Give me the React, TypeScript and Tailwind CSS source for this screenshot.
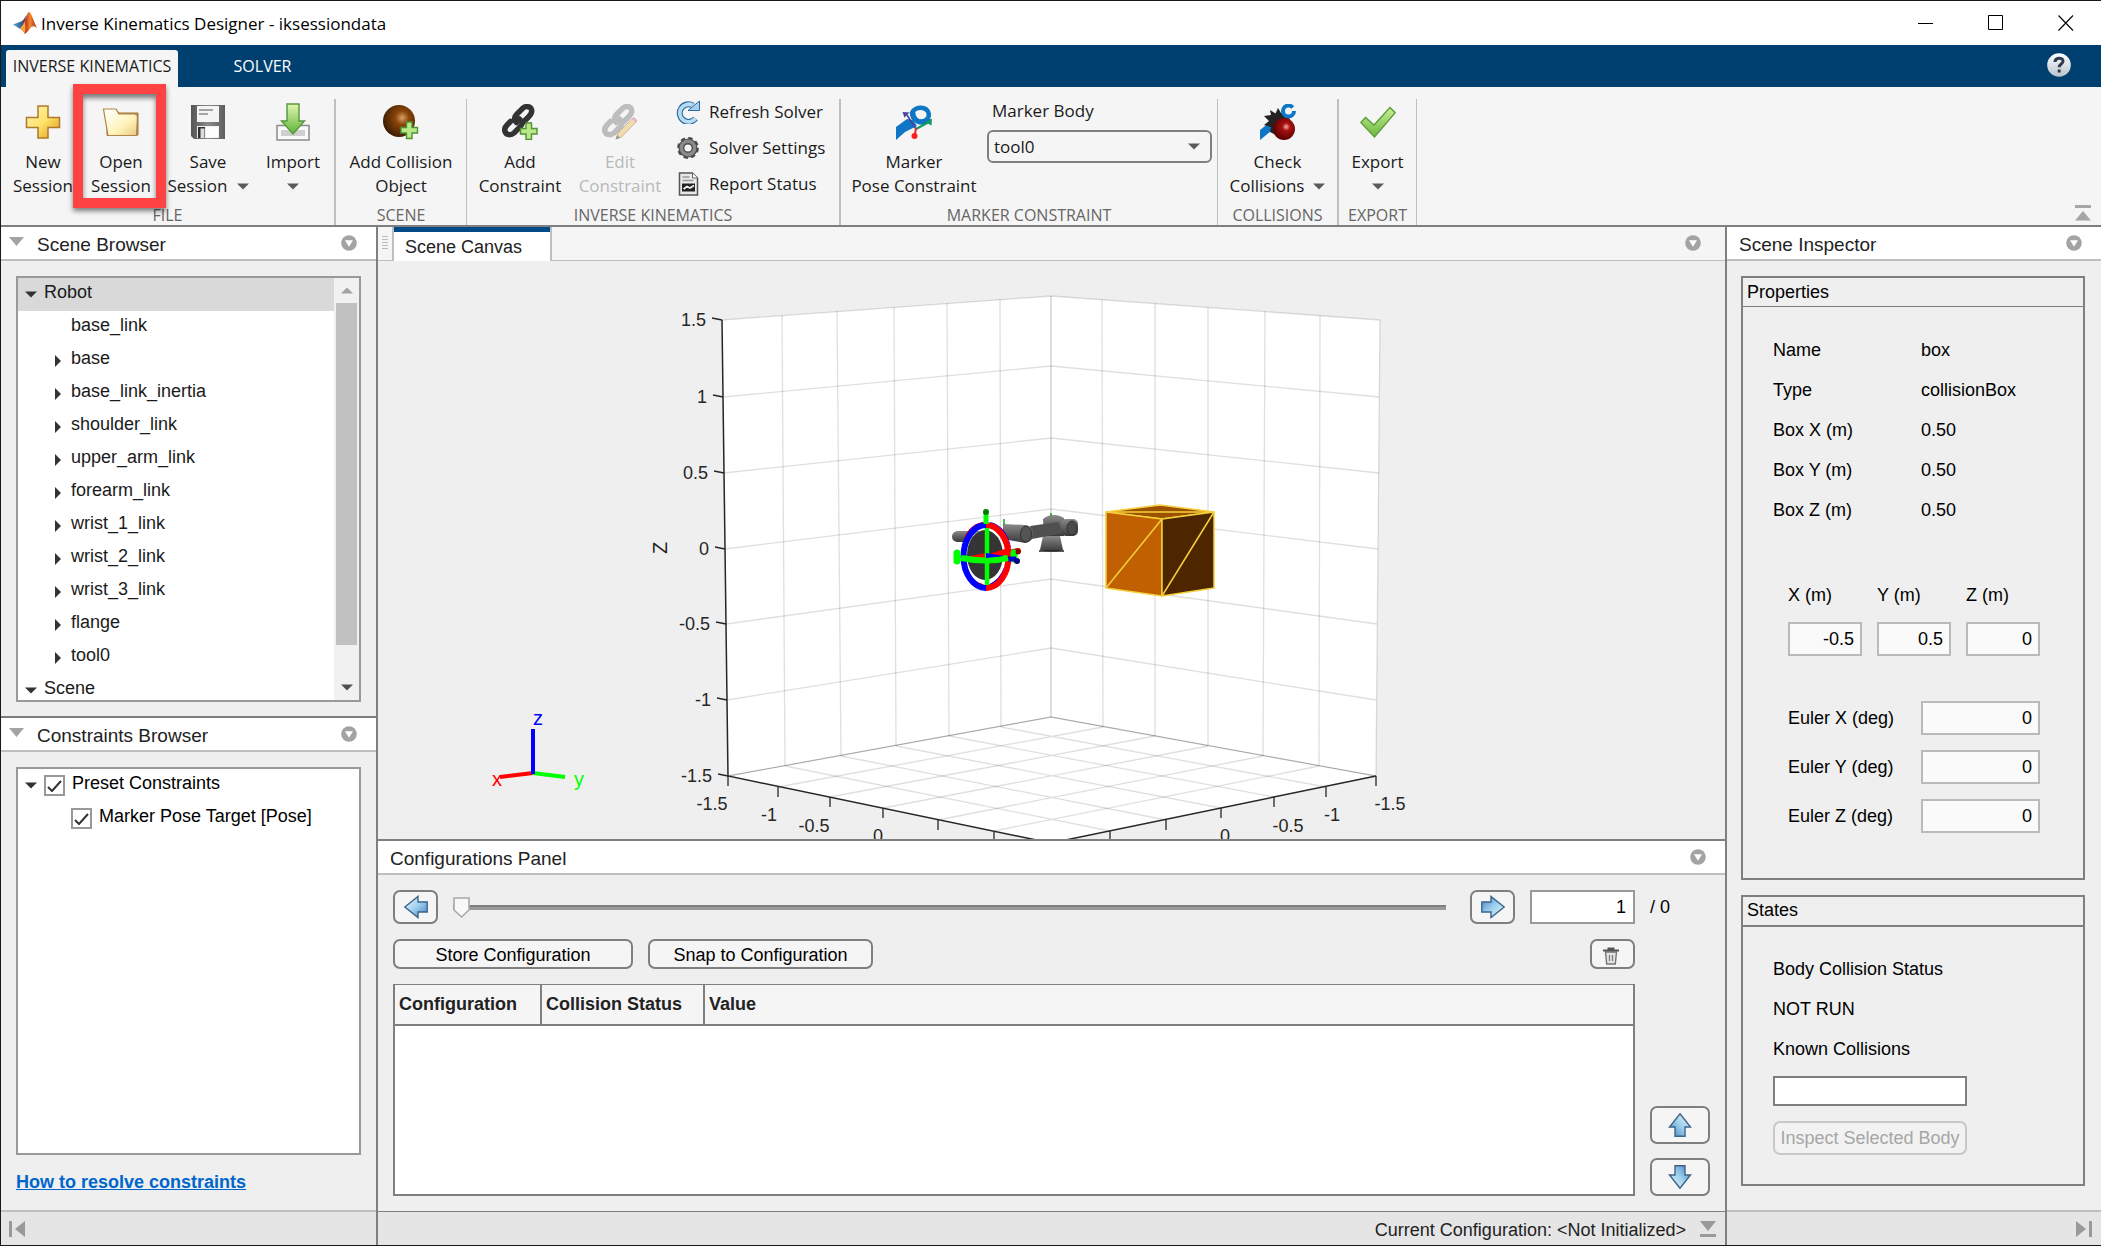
import React, { useState } from "react";

const sans = "font-['Liberation_Sans',Arial,sans-serif]";

/* ---------- small glyphs ---------- */

function Caret({ className = "text-[#5a5a5a]" }: { className?: string }) {
  return (
    <svg width="12" height="7" viewBox="0 0 12 7" className={className} aria-hidden="true">
      <path d="M0 0.5h12L6 6.5z" fill="currentColor" />
    </svg>
  );
}

function CaretRight() {
  return (
    <svg width="6" height="12" viewBox="0 0 6 12" aria-hidden="true">
      <path d="M0 0v12L6 6z" fill="#333" />
    </svg>
  );
}

function PanelMenu() {
  return (
    <button aria-label="Panel menu" className="block">
      <svg width="16" height="16" viewBox="0 0 16 16">
        <circle cx="8" cy="8" r="7.8" fill="#a3a3a3" />
        <path d="M4 5.2h8L8 11.8z" fill="#fff" />
      </svg>
    </button>
  );
}

function MatlabLogo() {
  return (
    <svg width="24" height="22" viewBox="0 0 24 22" aria-hidden="true">
      <defs>
        <linearGradient id="ml1" x1="0" x2="1">
          <stop offset="0" stopColor="#5fa8dc" />
          <stop offset="1" stopColor="#1f4e79" />
        </linearGradient>
        <linearGradient id="ml2" x1="0" x2="1">
          <stop offset="0" stopColor="#7a1c12" />
          <stop offset="0.35" stopColor="#c8371c" />
          <stop offset="0.6" stopColor="#f08a2c" />
          <stop offset="1" stopColor="#a02314" />
        </linearGradient>
      </defs>
      <path d="M0 12.5L8 9.4l3 2.4-4.2 5z" fill="url(#ml1)" />
      <path d="M8 9.4c2.200-.4 4-4.200 5.500-6.700L11 12.300z" fill="#3b4a72" />
      <path d="M16.200 0c1.800 0 4.500 9.500 7.800 16-2.600-2.200-4.500-2.600-7 .5-1.700 2.200-3.200 4.500-5.400 5.500-.8-2.300-2.200-4.600-4.800-5.200 5-3.800 6.700-16.800 9.400-16.800z" fill="url(#ml2)" />
      <path d="M11.600 22c-.8-2.300-2.200-4.600-4.800-5.200 2-1.600 3.500-4.600 4.700-7.500 1 4 1.500 8 .1 12.700z" fill="#f2a93b" />
    </svg>
  );
}

/* ---------- ribbon icons ---------- */

function PlusIcon() {
  return (
    <svg width="36" height="36" viewBox="0 0 36 36" aria-hidden="true">
      <defs>
        <linearGradient id="pl" x1="0" y1="0" x2="1" y2="1">
          <stop offset="0" stopColor="#fff6c0" />
          <stop offset="0.5" stopColor="#ffe36a" />
          <stop offset="1" stopColor="#d99a1c" />
        </linearGradient>
      </defs>
      <path d="M13 2h10v11.500h11.500v10H23V34H13V23.500H1.500v-10H13z" fill="url(#pl)" stroke="#b0782a" strokeWidth="1.500" />
    </svg>
  );
}

function FolderIcon() {
  return (
    <svg width="36" height="36" viewBox="0 0 36 36" aria-hidden="true">
      <defs>
        <linearGradient id="fo" x1="0" y1="0" x2="1" y2="1">
          <stop offset="0" stopColor="#ffffff" />
          <stop offset="0.6" stopColor="#fff4bd" />
          <stop offset="1" stopColor="#e8c77c" />
        </linearGradient>
      </defs>
      <path d="M4 31.500V5.500h9l3 3.500h19v22z" fill="#c79a5b" stroke="#9c7236" />
      <path d="M.5 5h12.500l2.800 5h16.500l2.200 2-1 19.500H5z" fill="url(#fo)" stroke="#b08548" strokeWidth="1.200" />
    </svg>
  );
}

function SaveIcon() {
  return (
    <svg width="36" height="36" viewBox="0 0 36 36" aria-hidden="true">
      <defs>
        <linearGradient id="sv" x1="0" x2="1">
          <stop offset="0" stopColor="#555" />
          <stop offset="0.5" stopColor="#8a8a8a" />
          <stop offset="1" stopColor="#5d5d5d" />
        </linearGradient>
      </defs>
      <path d="M1 1h34v34H4l-3-3z" fill="url(#sv)" />
      <path d="M7 2h22v16H7z" fill="#f4f4f4" />
      <path d="M9 6h14M9 10h9" stroke="#888" strokeWidth="1.500" />
      <path d="M7 22h22v12H7z" fill="#eee" />
      <path d="M8 23h7v11H8z" fill="#333" />
      <path d="M10.500 24.500h4V34h-4z" fill="#ddd" />
      <path d="M16 23h12v10.500H16z" fill="#fdfdfd" />
    </svg>
  );
}

function ImportIcon() {
  return (
    <svg width="36" height="38" viewBox="0 0 36 38" aria-hidden="true">
      <defs>
        <linearGradient id="im" x1="0" y1="0" x2="0" y2="1">
          <stop offset="0" stopColor="#e0f7b0" />
          <stop offset="1" stopColor="#5fb336" />
        </linearGradient>
      </defs>
      <path d="M2 22.500h32V37H2z" fill="#fafafa" stroke="#8b8b8b" strokeWidth="1.500" />
      <path d="M6 27h24v6H6z" fill="#cfcfcf" />
      <path d="M12 1h12v17h5.500L18 31 6.500 18H12z" fill="url(#im)" stroke="#55963c" strokeWidth="1.400" />
    </svg>
  );
}

function GreenPlus({ x, y }: { x: number; y: number }) {
  return (
    <path
      transform={`translate(${x} ${y})`}
      d="M6.500 1h5.500v5.500h5.500V12H12v5.500H6.500V12H1V6.500h5.500z"
      fill="#b9e986"
      stroke="#4f9135"
      strokeWidth="1.400"
    />
  );
}

function SphereAddIcon() {
  return (
    <svg width="36" height="36" viewBox="0 0 36 36" aria-hidden="true">
      <defs>
        <radialGradient id="sp" cx="0.6" cy="0.4" r="0.6">
          <stop offset="0" stopColor="#d9a06a" />
          <stop offset="0.35" stopColor="#8c4508" />
          <stop offset="1" stopColor="#3f1e03" />
        </radialGradient>
      </defs>
      <circle cx="16" cy="17" r="16" fill="url(#sp)" />
      <GreenPlus x={17} y={17} />
    </svg>
  );
}

function ChainLinks({ color }: { color: string }) {
  return (
    <g fill="none" stroke={color} strokeWidth="5.500" strokeLinecap="round">
      <path d="M14.500 18.500C11.500 15.500 12.500 12.500 15 10l6-6c3-2.500 7.500-1.500 8.500 1.500s-.5 5-3.500 8l-4 4" />
      <path d="M17.500 15c3 2.500 3.500 5 .5 8l-6 6c-3 2.500-7 2-8.500-.5s-.5-5.500 2-8l3-3" />
    </g>
  );
}

function ChainAddIcon() {
  return (
    <svg width="36" height="36" viewBox="0 0 36 36" aria-hidden="true">
      <ChainLinks color="#333" />
      <GreenPlus x={17.5} y={18} />
    </svg>
  );
}

function ChainEditIcon() {
  return (
    <svg width="36" height="36" viewBox="0 0 36 36" aria-hidden="true">
      <ChainLinks color="#bdbdbd" />
      <path d="M14 35l2-6L31 14l3.500 3.500L19.500 33z" fill="#f0dcae" stroke="#c9b891" strokeWidth="1" />
      <path d="M30 15l2-2 3.500 3.500-2 2z" fill="#eab0c0" />
      <path d="M13.500 35.500l1.800-4.500 2.700 2.700z" fill="#999" />
    </svg>
  );
}

function RefreshIcon() {
  return (
    <svg width="24" height="24" viewBox="0 0 24 24" aria-hidden="true">
      <path d="M19.500 18.500A8.800 8.800 0 1 1 17 5.500" fill="none" stroke="#2e6a9c" strokeWidth="6" />
      <path d="M19.500 18.500A8.800 8.800 0 1 1 17 5.500" fill="none" stroke="#b5dcf2" strokeWidth="3.800" />
      <path d="M12 10.500h11.500V1z" fill="#a4d2ee" stroke="#2e6a9c" strokeWidth="1" />
    </svg>
  );
}

function GearIcon() {
  return (
    <svg width="24" height="24" viewBox="0 0 24 24" aria-hidden="true">
      <circle cx="12" cy="12" r="9.300" fill="none" stroke="#4a4a4a" strokeWidth="3.200" strokeDasharray="4.200 3.100" />
      <circle cx="12" cy="12" r="6.800" fill="none" stroke="#8a8a8a" strokeWidth="4.600" />
      <circle cx="12" cy="12" r="9" fill="none" stroke="#4a4a4a" strokeWidth="1.200" />
      <circle cx="12" cy="12" r="4.300" fill="#f4f4f4" stroke="#4a4a4a" strokeWidth="1.400" />
    </svg>
  );
}

function ReportIcon() {
  return (
    <svg width="24" height="24" viewBox="0 0 24 24" aria-hidden="true">
      <path d="M3.500 1h13l5 5v17h-18z" fill="#e9e9e9" stroke="#555" strokeWidth="1.500" />
      <path d="M16.500 1v5h5" fill="#fff" stroke="#666" />
      <path d="M6.500 5h7M6.500 8.500h11" stroke="#999" strokeWidth="1.300" />
      <path d="M6 11.500h13v8H6z" fill="#222" />
      <path d="M7.500 17l3.500-2.500 3 1.500 4-2.500" stroke="#eee" strokeWidth="1.800" fill="none" />
    </svg>
  );
}

function MarkerPoseIcon() {
  return (
    <svg width="36" height="36" viewBox="0 0 36 36" aria-hidden="true">
      <path d="M0 23l11-8 6 1 4 6L9 28l-9 8z" fill="#0e76c4" />
      <path d="M16 9.500C17 5 22 3 27 4c5 1 7 6 5 10" fill="none" stroke="#0e76c4" strokeWidth="4.500" />
      <path d="M16.500 8c0 6 4 10 9 10 4 0 6-2 7-4" fill="none" stroke="#0e76c4" strokeWidth="5.500" />
      <path d="M20 25l-9-14" stroke="#4a3fa0" strokeWidth="1.600" />
      <path d="M6.500 8l7 .5-5 5z" fill="#4a3fa0" />
      <path d="M20 25l13-7" stroke="#149b5c" strokeWidth="2" />
      <path d="M36 14.500l-.5 7-5.500-3z" fill="#149b5c" />
      <path d="M20 24l-1 6" stroke="#ee2222" strokeWidth="2" />
      <circle cx="18.500" cy="32" r="3" fill="#ff1f1f" />
    </svg>
  );
}

function CollisionIcon() {
  return (
    <svg width="36" height="36" viewBox="0 0 36 36" aria-hidden="true">
      <defs>
        <radialGradient id="co" cx="0.6" cy="0.4" r="0.6">
          <stop offset="0" stopColor="#f5b0a0" />
          <stop offset="0.3" stopColor="#a81010" />
          <stop offset="1" stopColor="#5a0000" />
        </radialGradient>
      </defs>
      <path d="M0 26l10-8 6 5L0 36z" fill="#0e76c4" />
      <path d="M10 6l5.500 3.500L18 4l3 5h6l3 7-2 12-10 4-8-4 1-5-7-2 5-4-5-5 7-1z" fill="#222" />
      <circle cx="28.500" cy="7" r="5.500" fill="#f5f5f5" stroke="#0e76c4" strokeWidth="4" strokeDasharray="30 6" />
      <circle cx="24" cy="25" r="11" fill="url(#co)" />
    </svg>
  );
}

function CheckIcon() {
  return (
    <svg width="36" height="36" viewBox="0 0 36 36" aria-hidden="true">
      <defs>
        <linearGradient id="ck" x1="0" y1="0" x2="0" y2="1">
          <stop offset="0" stopColor="#c9ef96" />
          <stop offset="1" stopColor="#6cb840" />
        </linearGradient>
      </defs>
      <path d="M.8 18.500L5.500 13.500l8.500 7.500L30 3.500l5.200 5.200L14.500 33z" fill="url(#ck)" stroke="#5a9a3a" strokeWidth="1.300" />
    </svg>
  );
}

/* ---------- ribbon building blocks ---------- */

function Group({ label, className, children }: { label: string; className: string; children: React.ReactNode }) {
  return (
    <section className={`flex shrink-0 flex-col border-[#bfbfbf] ${className}`}>
      <div className="flex flex-1">{children}</div>
      <h2 className="text-center text-[16px] leading-[19px] text-[#666]">{label}</h2>
    </section>
  );
}

function Tool({
  icon,
  top,
  bottom,
  caret,
  disabled,
  className,
  children,
}: {
  icon: React.ReactNode;
  top: string;
  bottom?: string;
  caret?: boolean;
  disabled?: boolean;
  className: string;
  children?: React.ReactNode;
}) {
  return (
    <div className={`relative ${className}`}>
      <button
        disabled={disabled}
        className="flex w-full flex-col items-center whitespace-nowrap pt-[5px] text-[17px] leading-6 disabled:text-[#b9b9b9]"
      >
        <span className="mb-[10px] flex h-9 items-center">{icon}</span>
        <span>{top}</span>
        <span className="flex h-6 items-center justify-center gap-[9px]">
          {bottom}
          {caret && <Caret />}
        </span>
      </button>
      {children}
    </div>
  );
}

function Ribbon() {
  return (
    <div className="flex h-[140px] shrink-0 items-stretch border-b-2 border-[#7f7f7f] bg-[#f5f5f5] pt-3">
      <Group label="FILE" className="w-[335px] border-r-2">
        <div className="flex gap-1 pl-[5px]">
          <Tool icon={<PlusIcon />} top="New" bottom="Session" className="w-[74px]" />
          <Tool icon={<FolderIcon />} top="Open" bottom="Session" className="w-[74px]">
            <div className="pointer-events-none absolute -left-[11px] -top-[15px] z-10 h-[124px] w-[93px] border-[10px] border-[#ff4343] shadow-[0_3px_5px_rgba(0,0,0,0.5),inset_0_4px_5px_rgba(0,0,0,0.5)]" />
          </Tool>
          <Tool icon={<SaveIcon />} top="Save" bottom="Session" caret className="w-[92px]" />
          <Tool icon={<ImportIcon />} top="Import" caret className="w-[70px]" />
        </div>
      </Group>
      <Group label="SCENE" className="w-[131px] border-r">
        <Tool icon={<SphereAddIcon />} top="Add Collision" bottom="Object" className="w-full" />
      </Group>
      <Group label="INVERSE KINEMATICS" className="w-[374px] border-r-2">
        <Tool icon={<ChainAddIcon />} top="Add" bottom="Constraint" className="ml-[7px] w-[92px]" />
        <Tool icon={<ChainEditIcon />} top="Edit" bottom="Constraint" disabled className="ml-2 w-[92px]" />
        <div className="ml-[10px] flex flex-col text-[17px] leading-6">
          <button className="flex h-[26px] items-center gap-[9px] whitespace-nowrap">
            <RefreshIcon />
            Refresh Solver
          </button>
          <button className="mt-[10px] flex h-[26px] items-center gap-[9px] whitespace-nowrap">
            <GearIcon />
            Solver Settings
          </button>
          <button className="mt-[10px] flex h-[26px] items-center gap-[9px] whitespace-nowrap">
            <ReportIcon />
            Report Status
          </button>
        </div>
      </Group>
      <Group label="MARKER CONSTRAINT" className="w-[377px] border-r">
        <Tool icon={<MarkerPoseIcon />} top="Marker" bottom="Pose Constraint" className="ml-2 w-[130px]" />
        <div className="ml-2 w-[225px] text-[17px] leading-6">
          <label htmlFor="marker-body" className="block h-[31px] pl-[5px]">
            Marker Body
          </label>
          <div className="relative">
            <select
              id="marker-body"
              defaultValue="tool0"
              className="h-[33px] w-full appearance-none rounded-[6px] border-2 border-[#7f7f7f] bg-[#f5f5f5] px-[5px] leading-6"
            >
              <option>tool0</option>
              <option>flange</option>
            </select>
            <span className="pointer-events-none absolute inset-y-0 right-3 flex items-center">
              <Caret />
            </span>
          </div>
        </div>
      </Group>
      <Group label="COLLISIONS" className="w-[121px] border-r-2">
        <Tool icon={<CollisionIcon />} top="Check" bottom="Collisions" caret className="w-full" />
      </Group>
      <Group label="EXPORT" className="w-[78px] border-r">
        <Tool icon={<CheckIcon />} top="Export" caret className="w-full" />
      </Group>
      <div className="flex flex-1 items-end justify-end pb-1 pr-[10px]">
        <button aria-label="Collapse toolstrip">
          <svg width="16" height="16" viewBox="0 0 16 16">
            <path d="M0 0h16v3H0zM8 6l8 9.500H0z" fill="#a6a6a6" />
          </svg>
        </button>
      </div>
    </div>
  );
}

/* ---------- side panels ---------- */

function PanelHeader({ title, collapsible }: { title: string; collapsible?: boolean }) {
  return (
    <header className="flex h-[34px] shrink-0 items-center border-b-2 border-[#bfbfbf] bg-white pr-[19px]">
      {collapsible && (
        <button aria-label={`Collapse ${title}`} className="mb-1 ml-2 mr-[13px]">
          <svg width="15" height="9" viewBox="0 0 15 9">
            <path d="M0 0h15L7.500 9z" fill="#a3a3a3" />
          </svg>
        </button>
      )}
      <h2 className={`flex-1 pt-1 text-[19px] leading-6 text-[#222] ${collapsible ? "" : "pl-3"}`}>{title}</h2>
      <PanelMenu />
    </header>
  );
}

const links = [
  "base_link",
  "base",
  "base_link_inertia",
  "shoulder_link",
  "upper_arm_link",
  "forearm_link",
  "wrist_1_link",
  "wrist_2_link",
  "wrist_3_link",
  "flange",
  "tool0",
];

function SceneBrowser() {
  return (
    <section className="flex flex-col border-b-2 border-[#7f7f7f]">
      <PanelHeader title="Scene Browser" collapsible />
      <div className="mx-[15px] mb-[14px] mt-[15px] flex h-[426px] overflow-hidden border-2 border-[#999] bg-white">
        <ul className="flex-1 text-[18px] leading-[29px] text-[#1a1a1a]">
          <li className="flex h-[33px] bg-[#d9d9d9] pl-[7px]">
            <span className="flex w-[19px] items-center">
              <Caret className="text-[#333]" />
            </span>
            Robot
          </li>
          {links.map((l, i) => (
            <li key={l} className="flex h-[33px] pl-[37px]">
              <span className="flex w-4 items-center">{i > 0 && <CaretRight />}</span>
              {l}
            </li>
          ))}
          <li className="flex h-[33px] pl-[7px]">
            <span className="flex w-[19px] items-center">
              <Caret className="text-[#333]" />
            </span>
            Scene
          </li>
        </ul>
        <div className="flex w-[25px] flex-col items-center bg-[#f1f1f1]">
          <div className="flex h-[25px] shrink-0 items-center">
            <Caret className="rotate-180 text-[#a3a3a3]" />
          </div>
          <div className="h-[342px] w-[21px] bg-[#c1c1c1]" />
          <div className="flex flex-1 items-end pb-[9px]">
            <Caret className="text-[#505050]" />
          </div>
        </div>
      </div>
    </section>
  );
}

function Tick({ id }: { id: string }) {
  return (
    <span className="relative mt-[2px] block h-[21px] w-[21px] shrink-0">
      <input id={id} type="checkbox" defaultChecked className="peer block h-full w-full appearance-none border-2 border-[#999] bg-white" />
      <svg
        width="15"
        height="12"
        viewBox="0 0 15 12"
        className="pointer-events-none absolute left-[3px] top-[5px] hidden peer-checked:block"
      >
        <path d="M1 7l4 4 9-10" fill="none" stroke="#333" strokeWidth="2" />
      </svg>
    </span>
  );
}

function ConstraintsBrowser() {
  return (
    <section className="flex min-h-0 flex-1 flex-col">
      <PanelHeader title="Constraints Browser" collapsible />
      <ul className="mx-[15px] mt-[15px] flex-1 border-2 border-[#999] bg-white pt-1 text-[18px] leading-5 text-black">
        <li className="flex h-[33px] pl-[7px]">
          <span className="flex h-6 w-[19px] items-center">
            <Caret className="text-[#333]" />
          </span>
          <Tick id="preset" />
          <label htmlFor="preset" className="pl-[7px]">
            Preset Constraints
          </label>
        </li>
        <li className="flex h-[33px] pl-[53px]">
          <Tick id="pose" />
          <label htmlFor="pose" className="pl-[7px]">
            Marker Pose Target [Pose]
          </label>
        </li>
      </ul>
      <a href="#resolve" className="mb-[17px] ml-[15px] mt-4 self-start text-[18px] font-bold leading-[22px] text-[#0066cc] underline">
        How to resolve constraints
      </a>
      <footer className="flex h-[35px] shrink-0 items-center border-t-2 border-[#bfbfbf] bg-[#e5e5e5] pl-2">
        <button aria-label="First">
          <svg width="16" height="16" viewBox="0 0 16 16">
            <path d="M0 0h3v16H0zM16 0v16L6 8z" fill="#999" />
          </svg>
        </button>
      </footer>
    </section>
  );
}

/* ---------- 3-D axes ---------- */

type P = [number, number];
const topL: P[] = [[722, 320], [782, 315], [837, 311], [894, 307], [947, 303], [1000, 299]];
const wallL: P[] = [[728, 776], [785, 766], [841, 756], [896, 746], [949, 736], [1001, 727]];
const edgeL: P[] = [[728, 776], [778, 787], [830, 797], [883, 808], [938, 820], [994, 831]];
const zL: P[] = [[722, 320], [723, 397], [724, 473], [725, 549], [726, 624], [727, 700], [728, 776]];
const zC = [296, 366, 438, 509, 579, 648, 717];
const zNames = ["1.5", "1", "0.5", "0", "-0.5", "-1", "-1.5"];
const mir = ([x, y]: P): P => [y > 700 ? 2104 - x : 2102 - x, y];
const seg = (a: P, b: P) => `M${a[0]} ${a[1]}L${b[0]} ${b[1]}`;
const wallR = wallL.map(mir);
const edgeR = edgeL.map(mir);

function Robot() {
  return (
    <g>
      <defs>
        <linearGradient id="arm" x1="0" y1="0" x2="0" y2="1">
          <stop offset="0" stopColor="#8a8a8a" />
          <stop offset="0.5" stopColor="#606060" />
          <stop offset="1" stopColor="#3a3a3a" />
        </linearGradient>
      </defs>
      <path d="M1043 536h17l3 14q-11 3-23 0z" fill="url(#arm)" />
      <path d="M1039 551h25" stroke="#222" strokeWidth="1.500" />
      <path d="M1043 519q7-6 17-3l4 2v18h-20z" fill="url(#arm)" />
      <path d="M1030 526l28-4 6 11-32 6z" fill="#505050" />
      <rect x="1061" y="519" width="17" height="17" rx="5" fill="url(#arm)" />
      <ellipse cx="1072" cy="528" rx="5" ry="7" fill="#4a4a4a" stroke="#333" />
      <path d="M1003 524l22 1q8 1 8 9t-8 9l-22-4z" fill="url(#arm)" />
      <ellipse cx="1026" cy="534" rx="5.500" ry="8" fill="#555" stroke="#333" />
      <path d="M957 531h22v11h-22q-5-1-5-5.500t5-5.500z" fill="url(#arm)" />
      <path d="M1004 519v6M1051 513v3" stroke="#1a9a1a" strokeWidth="1.500" />
    </g>
  );
}

function Gizmo() {
  return (
    <g fill="none">
      <path d="M1010 553l8-2" stroke="#c00000" strokeWidth="6" strokeLinecap="round" />
      <path d="M986 524a22 32 0 0 0-20 14M966 568a22 28 0 0 0 17 18" stroke="#f00" strokeWidth="4" />
      <path d="M990 524q15 4 19 24M1006 568q-5 13-16 18" stroke="#00f" strokeWidth="4" />
      <ellipse cx="985" cy="557" rx="19" ry="26" stroke="#fff" strokeWidth="1.500" />
      <ellipse cx="985" cy="555" rx="18" ry="25" fill="#353535" />
      <path d="M986 525a22.500 31.500 0 0 0 0 63" stroke="#00f" strokeWidth="6" />
      <path d="M986 525a22.500 31.500 0 0 1 0 63" stroke="#f00" strokeWidth="6" />
      <path d="M986 555l22-7v8z" fill="#f00" />
      <path d="M965 557l21-4v5z" fill="#f00" />
      <path d="M957 553v8M1014 553v6" stroke="#0f0" strokeWidth="7" strokeLinecap="round" />
      <path d="M1008 559h8" stroke="#00c" strokeWidth="5" />
      <circle cx="1017" cy="561" r="3" fill="#000080" />
      <circle cx="1018" cy="552" r="2.500" fill="#800000" />
      <path d="M961 558q26 5 47 0" stroke="#0f0" strokeWidth="6" />
      <path d="M987 528v57" stroke="#0f0" strokeWidth="4.500" />
      <path d="M986 512v12" stroke="#0f0" strokeWidth="5" />
      <circle cx="986" cy="512" r="3" fill="#087808" />
      <path d="M986 553l18 3-18 2z" fill="#00f" />
    </g>
  );
}

function Axes() {
  return (
    <svg
      viewBox="378 261 1347 578"
      preserveAspectRatio="xMidYMin slice"
      className="absolute inset-0 h-full w-full font-['Liberation_Sans',Arial,sans-serif] text-[18px]"
      role="img"
      aria-label="Scene axes"
    >
      <path d="M722 320L1051 296L1380 320L1376 776L1051 843L728 776Z" fill="#fff" />
      <g stroke="#262626" strokeOpacity="0.15" fill="none" strokeWidth="1.300">
        {topL.slice(1).map((p, i) => (
          <path key={i} d={seg(p, wallL[i + 1]) + seg(mir(p), wallR[i + 1])} />
        ))}
        {zL.map((p, i) => (
          <path key={i} d={seg(p, [1051, zC[i]]) + seg([1380 - Math.round(i * 0.7), p[1]], [1051, zC[i]])} />
        ))}
        {[1, 2, 3, 4, 5].map((i) => (
          <path key={i} d={seg(wallL[i], edgeR[6 - i]) + seg(wallR[i], edgeL[6 - i])} />
        ))}
        <path d="M1380 320L1376 776" />
      </g>
      <path d="M1051 296V717M728 776L1051 717L1376 776" stroke="#262626" strokeOpacity="0.3" fill="none" />
      <path d="M722 320L728 776L1051 843L1376 776" stroke="#262626" fill="none" strokeWidth="1.500" />
      <g stroke="#262626" strokeWidth="1.300">
        {zL.map(([x, y], i) => (
          <path key={i} d={`M${x} ${y}l-10-2`} />
        ))}
        {edgeL.concat(edgeR).map(([x, y], i) => (
          <path key={i} d={`M${x} ${y}v10`} />
        ))}
      </g>
      <g fill="#262626">
        {zNames.map((n, i) => (
          <text key={n} x={706 + i} y={zL[i][1] + 6} textAnchor="end">
            {n}
          </text>
        ))}
        <g textAnchor="middle">
          <text x="712" y="810">-1.5</text>
          <text x="769" y="821">-1</text>
          <text x="814" y="832">-0.5</text>
          <text x="878" y="842">0</text>
          <text x="1225" y="842">0</text>
          <text x="1288" y="832">-0.5</text>
          <text x="1332" y="821">-1</text>
          <text x="1390" y="810">-1.5</text>
          <text x="667" y="548" transform="rotate(-90 667 548)" className="text-[20px]">
            Z
          </text>
        </g>
      </g>
      <Robot />
      <Gizmo />
      <g stroke="#f5cf3a" strokeWidth="1.500" strokeLinejoin="round">
        <path d="M1106 512L1160 505L1214 512L1162 519Z" fill="#9a5200" />
        <path d="M1106 512L1162 519V596L1106 588Z" fill="#c06000" />
        <path d="M1214 512L1162 519V596L1214 588Z" fill="#4d2600" />
        <path d="M1106 512H1214M1106 588L1162 519M1162 596L1214 512" />
      </g>
      <g strokeWidth="4">
        <path d="M533 773L500 777" stroke="#f00" />
        <path d="M533 773L565 777" stroke="#0f0" />
        <path d="M533 774V729" stroke="#00f" />
      </g>
      <g textAnchor="middle" className="text-[20px]">
        <text x="538" y="725" fill="#00f">z</text>
        <text x="497" y="786" fill="#f00">x</text>
        <text x="579" y="786" fill="#0f0">y</text>
      </g>
    </svg>
  );
}

/* ---------- configurations ---------- */

function BlueArrow({ turn }: { turn: string }) {
  return (
    <svg width="24" height="24" viewBox="0 0 24 24" className={turn} aria-hidden="true">
      <defs>
        <linearGradient id="ba" x1="0" y1="0" x2="1" y2="1">
          <stop offset="0" stopColor="#eef9ff" />
          <stop offset="0.5" stopColor="#9fd0ee" />
          <stop offset="1" stopColor="#3f7fc0" />
        </linearGradient>
      </defs>
      <path d="M.8 12L14 1.500V7h9.200v10H14v5.500z" fill="url(#ba)" stroke="#3d6487" strokeWidth="1.400" />
    </svg>
  );
}

const btn = "flex items-center justify-center rounded-[7px] border-2 border-[#7f7f7f] bg-[#f5f5f5]";

function ConfigurationsPanel() {
  const [pos, setPos] = useState(0);
  return (
    <section className="shrink-0 border-t-2 border-[#7f7f7f]">
      <PanelHeader title="Configurations Panel" />
      <div className="flex p-[15px] text-[18px] text-black">
        <div className="flex min-w-0 flex-1 flex-col">
          <div className="flex items-center">
            <button aria-label="Previous configuration" className={`h-[34px] w-[45px] ${btn}`}>
              <BlueArrow turn="" />
            </button>
            <div className="relative ml-[15px] mr-6 h-5 flex-1">
              <div className="mt-[8px] h-[5px] border-t-2 border-[#7f7f7f] bg-[#999]" />
              <svg width="17" height="21" viewBox="0 0 17 21" className="absolute top-0" style={{ left: `${pos}%` }}>
                <path d="M1 1h15v12l-7.500 7L1 13z" fill="#f8f8f8" stroke="#a9a9a9" strokeWidth="1.600" />
              </svg>
              <input
                type="range"
                aria-label="Configuration index"
                min={0}
                max={98}
                value={pos}
                onChange={(e) => setPos(Number(e.target.value))}
                className="absolute inset-0 w-full opacity-0"
              />
            </div>
            <button aria-label="Next configuration" className={`h-[34px] w-[45px] ${btn}`}>
              <BlueArrow turn="rotate-180" />
            </button>
            <input
              aria-label="Current index"
              defaultValue="1"
              className="ml-[15px] h-[34px] w-[105px] border-2 border-[#999] bg-white px-[7px] text-right"
            />
          </div>
          <div className="mt-[15px] flex gap-[15px]">
            <button className={`h-[30px] w-[240px] ${btn} pt-[3px]`}>Store Configuration</button>
            <button className={`h-[30px] w-[225px] ${btn} pt-[3px]`}>Snap to Configuration</button>
            <button aria-label="Delete configuration" className={`ml-auto h-[30px] w-[45px] ${btn}`}>
              <svg width="16" height="18" viewBox="0 0 16 18" className="mr-[3px] mt-[3px]">
                <path d="M2.500 5h11l-1.200 12H3.700z" fill="#e4e4e4" stroke="#777" strokeWidth="1.400" />
                <path d="M0 3.500h16M4.500 1.500h7" stroke="#555" strokeWidth="2" />
                <path d="M6.500 8v6M9.500 8v6" stroke="#777" strokeWidth="1.200" />
              </svg>
            </button>
          </div>
          <div className="mt-[15px] h-[212px] border-2 border-t border-[#7f7f7f] bg-white">
            <table className="w-full table-fixed border-collapse">
              <thead>
                <tr className="h-10 border-b-2 border-[#7f7f7f] bg-[#f5f5f5] text-left text-[#222]">
                  <th className="w-[146px] border-r-2 border-[#7f7f7f] px-1">Configuration</th>
                  <th className="w-[163px] border-r-2 border-[#7f7f7f] px-1">Collision Status</th>
                  <th className="px-1">Value</th>
                </tr>
              </thead>
            </table>
          </div>
        </div>
        <div className="ml-[15px] flex w-[60px] flex-col">
          <span className="leading-[34px]">/ 0</span>
          <div className="flex flex-1 flex-col justify-end gap-[14px]">
            <button aria-label="Move up" className={`h-[38px] ${btn}`}>
              <BlueArrow turn="rotate-90" />
            </button>
            <button aria-label="Move down" className={`h-[38px] ${btn}`}>
              <BlueArrow turn="-rotate-90" />
            </button>
          </div>
        </div>
      </div>
      <footer className="flex h-[34px] items-center justify-end border-t border-[#7f7f7f] bg-[#e5e5e5] pr-[9px] text-[18px] text-[#222]">
        <span className="pt-1">Current Configuration: &lt;Not Initialized&gt;</span>
        <button aria-label="Status menu" className="ml-[14px]">
          <svg width="16" height="16" viewBox="0 0 16 16">
            <path d="M0 0h16L8 10zM0 13h16v3H0z" fill="#999" />
          </svg>
        </button>
      </footer>
    </section>
  );
}

/* ---------- inspector ---------- */

const properties = [
  ["Name", "box"],
  ["Type", "collisionBox"],
  ["Box X (m)", "0.50"],
  ["Box Y (m)", "0.50"],
  ["Box Z (m)", "0.50"],
];
const field = "border-2 border-[#bababa] bg-[#fafafa] px-[6px] text-right";

function Inspector() {
  return (
    <aside className="flex w-[376px] shrink-0 flex-col border-l-2 border-[#7f7f7f]">
      <PanelHeader title="Scene Inspector" />
      <div className="flex flex-1 flex-col gap-[15px] pl-[14px] pr-4 pt-[15px] text-[18px] leading-6 text-black">
        <section className="border-2 border-[#7f7f7f] pb-[45px]">
          <h3 className="h-[29px] border-b border-[#7f7f7f] pl-1 leading-[28px]">Properties</h3>
          <dl className="mt-[31px] grid grid-cols-[148px_1fr] gap-y-4 pl-[30px]">
            {properties.map(([k, v]) => (
              <React.Fragment key={k}>
                <dt>{k}</dt>
                <dd>{v}</dd>
              </React.Fragment>
            ))}
          </dl>
          <div className="mt-[61px] flex gap-[15px] pl-[45px]">
            {[["X (m)", "-0.5"], ["Y (m)", "0.5"], ["Z (m)", "0"]].map(([k, v]) => (
              <label key={k} className="w-[74px]">
                {k}
                <input defaultValue={v} className={`mt-[15px] block h-[34px] w-full ${field}`} />
              </label>
            ))}
          </div>
          <div className="mt-[45px] flex flex-col gap-[15px] pl-[45px]">
            {["X", "Y", "Z"].map((a) => (
              <label key={a} className="flex h-[34px] items-center">
                <span className="w-[133px]">Euler {a} (deg)</span>
                <input defaultValue="0" className={`h-[34px] w-[119px] ${field}`} />
              </label>
            ))}
          </div>
        </section>
        <section className="border-2 border-[#7f7f7f] pb-[29px]">
          <h3 className="h-[30px] border-b-2 border-[#7f7f7f] pl-1 leading-[27px]">States</h3>
          <div className="flex flex-col items-start pl-[30px] pt-[30px]">
            <p>Body Collision Status</p>
            <p className="mt-4">NOT RUN</p>
            <label htmlFor="known" className="mt-4">
              Known Collisions
            </label>
            <input id="known" className="mt-[15px] h-[30px] w-[194px] border-2 border-[#7f7f7f] bg-white px-1" />
            <button
              disabled
              className="mt-[15px] h-[34px] w-[194px] whitespace-nowrap rounded-[7px] border-2 border-[#c8c8c8] bg-[#f2f2f2] text-[#a6a6a6]"
            >
              Inspect Selected Body
            </button>
          </div>
        </section>
      </div>
      <footer className="flex h-[35px] shrink-0 items-center justify-end border-t-2 border-[#bfbfbf] bg-[#e5e5e5] pr-[9px]">
        <button aria-label="Last">
          <svg width="16" height="16" viewBox="0 0 16 16">
            <path d="M13 0h3v16h-3zM0 0v16L10 8z" fill="#999" />
          </svg>
        </button>
      </footer>
    </aside>
  );
}

/* ---------- window ---------- */

export default function App() {
  return (
    <div className={`flex h-screen w-full flex-col overflow-hidden border border-r-0 border-[#1a1a1a] bg-[#efefef] ${sans}`}>
      <div className="font-['Open_Sans','Noto_Sans',sans-serif] text-[#1a1a1a]">
        <header className="flex h-[44px] items-center bg-white pl-3 text-black">
          <MatlabLogo />
          <h1 className="ml-1 flex-1 pt-[2px] text-[17px] leading-6">Inverse Kinematics Designer - iksessiondata</h1>
          <div className="flex items-center gap-[54px] pr-[27px]">
            <button aria-label="Minimize">
              <svg width="16" height="16" viewBox="0 0 16 16">
                <path d="M0 8.500h15" stroke="#000" />
              </svg>
            </button>
            <button aria-label="Maximize">
              <svg width="16" height="16" viewBox="0 0 16 16">
                <path d="M.5 .5h14v14H.5z" fill="none" stroke="#000" />
              </svg>
            </button>
            <button aria-label="Close">
              <svg width="16" height="16" viewBox="0 0 16 16">
                <path d="M.5 .5l14.500 15M15 .5L.5 15.500" stroke="#000" strokeWidth="1.100" />
              </svg>
            </button>
          </div>
        </header>
        <nav className="flex h-[42px] items-end bg-[#004071] pl-[5px] text-[16px]">
          <button className="h-[37px] w-[172px] whitespace-nowrap rounded-t-[3px] bg-[#f5f5f5] pb-[6px]">INVERSE KINEMATICS</button>
          <button className="h-[37px] w-[169px] pb-[6px] text-white">SOLVER</button>
          <button aria-label="Help" className="mb-[10px] ml-auto mr-[30px]">
            <svg width="24" height="24" viewBox="0 0 24 24">
              <defs>
                <linearGradient id="hp" x1="0" y1="0" x2="0" y2="1">
                  <stop offset="0" stopColor="#fff" />
                  <stop offset="1" stopColor="#b9c4cc" />
                </linearGradient>
              </defs>
              <circle cx="12" cy="12" r="11.800" fill="url(#hp)" />
              <path d="M8 9c0-5 8-5 8-.8 0 2.800-3.800 2.800-3.800 6" fill="none" stroke="#2f3b52" strokeWidth="3" />
              <path d="M10.700 16.500h3v3h-3z" fill="#2f3b52" />
            </svg>
          </button>
        </nav>
        <Ribbon />
      </div>

      <div className="flex min-h-0 flex-1">
        <aside className="flex w-[377px] shrink-0 flex-col border-r-2 border-[#7f7f7f]">
          <SceneBrowser />
          <ConstraintsBrowser />
        </aside>

        <main className="flex min-w-0 flex-1 flex-col">
          <div className="flex h-[34px] shrink-0 items-stretch bg-[#f5f5f5]">
            <div className="flex w-[14px] items-start justify-center border-b border-[#bfbfbf] pt-[9px]">
              <svg width="6" height="14" viewBox="0 0 6 14" aria-hidden="true">
                <path d="M0 .5h6M0 3.500h6M0 6.500h6M0 9.500h6M0 12.500h6" stroke="#bbb" />
              </svg>
            </div>
            <button className="w-[160px] border-x-2 border-[#bfbfbf] bg-white text-left text-[18px] text-[#222]">
              <span className="block h-full border-t-[5px] border-[#004b87] pl-[11px] leading-[30px]">Scene Canvas</span>
            </button>
            <div className="flex flex-1 items-center justify-end border-b border-[#bfbfbf] pb-[2px] pr-6">
              <PanelMenu />
            </div>
          </div>
          <div className="relative min-h-0 flex-1 overflow-hidden">
            <Axes />
          </div>
          <ConfigurationsPanel />
        </main>

        <Inspector />
      </div>
    </div>
  );
}
